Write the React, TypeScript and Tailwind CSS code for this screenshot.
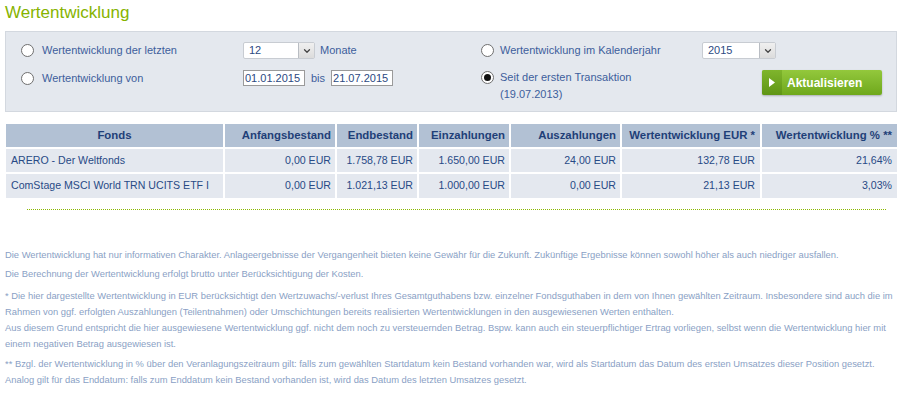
import { ChevronDown } from "lucide-react";

// Wertentwicklung — filter box, fund table and footnotes.
const ROWS = [
  { fonds: "ARERO - Der Weltfonds", anfang: "0,00 EUR", end: "1.758,78 EUR", ein: "1.650,00 EUR", aus: "24,00 EUR", eur: "132,78 EUR", pct: "21,64%" },
  { fonds: "ComStage MSCI World TRN UCITS ETF I", anfang: "0,00 EUR", end: "1.021,13 EUR", ein: "1.000,00 EUR", aus: "0,00 EUR", eur: "21,13 EUR", pct: "3,03%" },
];

function Radio({ checked }: { checked?: boolean }) {
  return (
    <span className="flex h-[13px] w-[13px] shrink-0 items-center justify-center rounded-full border border-[#6f6f6f] bg-white">
      {checked && <span className="h-[7px] w-[7px] rounded-full bg-[#111]" />}
    </span>
  );
}

function Select({ value, width }: { value: string; width: string }) {
  return (
    <div className={`flex h-[17px] items-stretch rounded-[2px] border border-[#c8ccd2] bg-white ${width}`}>
      <span className="flex-1 pl-[5px] leading-[15px] text-[#2c4a82]">{value}</span>
      <span className="flex w-[16px] items-center justify-center border-l border-[#b9bdc3] bg-gradient-to-b from-[#f0f0f0] to-[#dcdcdc]">
        <ChevronDown size={10} strokeWidth={3} className="text-[#444]" />
      </span>
    </div>
  );
}

function DateInput({ value }: { value: string }) {
  return (
    <div className="h-[16px] w-[62px] border border-[#9a9a9a] bg-white pl-[1px] leading-[14px] text-[#2c4a82]">{value}</div>
  );
}

export default function App() {
  return (
    <div className="h-[400px] w-[911px] overflow-hidden bg-white font-['Liberation_Sans',Arial,sans-serif] text-[11px]">
      <h1 className="pl-[5px] pt-[2px] text-[17px] leading-[22px] text-[#86b300]">Wertentwicklung</h1>

      {/* filter box */}
      <div className="ml-[5px] mt-[7px] flex h-[81px] w-[892px] border border-[#d3d8df] bg-[#e4e8ee] pl-[15px] pt-[10px] text-[#3d5e9c]">
        <div className="flex w-[460px] flex-col">
          <div className="flex h-[17px] items-center">
            <div className="flex w-[222px] items-center gap-[8px]">
              <Radio />
              <span>Wertentwicklung der letzten</span>
            </div>
            <Select value="12" width="w-[72px]" />
            <span className="ml-[5px]">Monate</span>
          </div>
          <div className="mt-[11px] flex h-[16px] items-center">
            <div className="flex w-[222px] items-center gap-[8px]">
              <Radio />
              <span>Wertentwicklung von</span>
            </div>
            <DateInput value="01.01.2015" />
            <span className="ml-[6px] mr-[6px]">bis</span>
            <DateInput value="21.07.2015" />
          </div>
        </div>

        <div className="flex flex-col">
          <div className="flex h-[17px] items-center">
            <div className="flex w-[221px] items-center gap-[6px]">
              <Radio />
              <span>Wertentwicklung im Kalenderjahr</span>
            </div>
            <Select value="2015" width="w-[74px]" />
          </div>
          <div className="mt-[11px] flex items-start">
            <div className="flex w-[281px] items-start gap-[6px]">
              <span className="mt-[1px]"><Radio checked /></span>
              <div className="leading-[17px]">
                <div className="-mt-[1px]">Seit der ersten Transaktion</div>
                <div>(19.07.2013)</div>
              </div>
            </div>
            <button className="flex h-[25px] w-[120px] items-stretch overflow-hidden rounded-[2px] bg-gradient-to-b from-[#93c83c] to-[#6fa81a] text-white shadow-[0_1px_2px_rgba(0,0,0,0.25)]">
              <span className="flex w-[20px] items-center justify-center bg-gradient-to-b from-[#7fb52c] to-[#5f9514]">
                <svg width="6" height="9" viewBox="0 0 6 9"><path d="M0 0 L6 4.5 L0 9 Z" fill="#fff" /></svg>
              </span>
              <span className="flex flex-1 items-center pl-[5px] text-[12px] font-bold">Aktualisieren</span>
            </button>
          </div>
        </div>
      </div>

      {/* fund table */}
      <table className="ml-[6px] mt-[12px] w-[891px] table-fixed border-collapse text-[10.6px]">
        <colgroup>
          <col className="w-[218px]" />
          <col className="w-[112px]" />
          <col className="w-[82px]" />
          <col className="w-[92px]" />
          <col className="w-[111px]" />
          <col className="w-[140px]" />
          <col className="w-[136px]" />
        </colgroup>
        <thead>
          <tr className="h-[24px] bg-[#b2c1d4] text-[11.4px] font-bold text-[#1f3f78]">
            <th className="border-r-2 border-white text-center">Fonds</th>
            <th className="border-r-2 border-white pr-[4px] text-right">Anfangsbestand</th>
            <th className="border-r-2 border-white pr-[4px] text-right">Endbestand</th>
            <th className="border-r-2 border-white pr-[4px] text-right">Einzahlungen</th>
            <th className="border-r-2 border-white pr-[4px] text-right">Auszahlungen</th>
            <th className="border-r-2 border-white pr-[5px] text-right">Wertentwicklung EUR *</th>
            <th className="pr-[5px] text-right">Wertentwicklung % **</th>
          </tr>
        </thead>
        <tbody className="text-[#284a86]">
          {ROWS.map((r) => (
            <tr key={r.fonds} className="h-[25px] border-t-2 border-white bg-[#e4e8ef] whitespace-nowrap">
              <td className="border-r-2 border-white pl-[5px]">{r.fonds}</td>
              <td className="border-r-2 border-white pr-[4px] text-right">{r.anfang}</td>
              <td className="border-r-2 border-white pr-[4px] text-right">{r.end}</td>
              <td className="border-r-2 border-white pr-[4px] text-right">{r.ein}</td>
              <td className="border-r-2 border-white pr-[4px] text-right">{r.aus}</td>
              <td className="border-r-2 border-white pr-[5px] text-right">{r.eur}</td>
              <td className="pr-[5px] text-right">{r.pct}</td>
            </tr>
          ))}
        </tbody>
      </table>

      <div className="ml-[27px] mt-[11px] w-[859px] border-t border-dotted border-[#8ab800]" />

      {/* footnotes */}
      <div className="mt-[37px] pl-[5px] text-[9.4px] leading-[16px] text-[#8a9fc5] whitespace-nowrap">
        <p>Die Wertentwicklung hat nur informativen Charakter. Anlageergebnisse der Vergangenheit bieten keine Gewähr für die Zukunft. Zukünftige Ergebnisse können sowohl höher als auch niedriger ausfallen.</p>
        <p className="mt-[3px]">Die Berechnung der Wertentwicklung erfolgt brutto unter Berücksichtigung der Kosten.</p>
        <p className="mt-[6px]">
          * Die hier dargestellte Wertentwicklung in EUR berücksichtigt den Wertzuwachs/-verlust Ihres Gesamtguthabens bzw. einzelner Fondsguthaben in dem von Ihnen gewählten Zeitraum. Insbesondere sind auch die im<br />
          Rahmen von ggf. erfolgten Auszahlungen (Teilentnahmen) oder Umschichtungen bereits realisierten Wertentwicklungen in den ausgewiesenen Werten enthalten.<br />
          Aus diesem Grund entspricht die hier ausgewiesene Wertentwicklung ggf. nicht dem noch zu versteuernden Betrag. Bspw. kann auch ein steuerpflichtiger Ertrag vorliegen, selbst wenn die Wertentwicklung hier mit<br />
          einem negativen Betrag ausgewiesen ist.
        </p>
        <p className="mt-[4px]">
          ** Bzgl. der Wertentwicklung in % über den Veranlagungszeitraum gilt: falls zum gewählten Startdatum kein Bestand vorhanden war, wird als Startdatum das Datum des ersten Umsatzes dieser Position gesetzt.<br />
          Analog gilt für das Enddatum: falls zum Enddatum kein Bestand vorhanden ist, wird das Datum des letzten Umsatzes gesetzt.
        </p>
      </div>
    </div>
  );
}
